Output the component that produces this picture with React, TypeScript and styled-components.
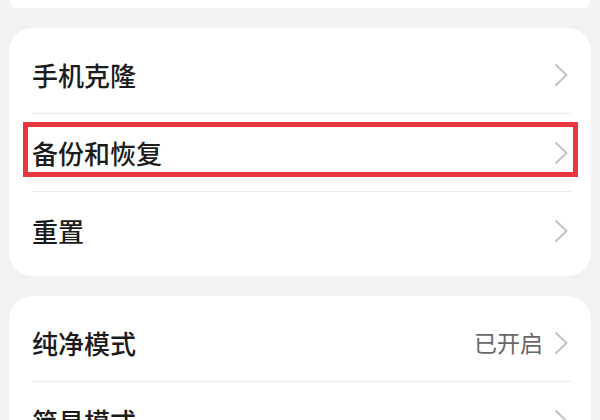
import styled, { createGlobalStyle } from "styled-components";

interface Item {
  title: string;
  value?: string;
  highlighted?: boolean;
}

const GlobalStyle = createGlobalStyle`
  html, body {
    margin: 0;
    padding: 0;
    background: #f1f2f4;
  }
  body {
    font-family: "Noto Sans CJK SC", "Noto Sans", sans-serif;
    overflow: hidden;
  }
`;

const groups: Item[][] = [
  [
    { title: "手机克隆" },
    { title: "备份和恢复", highlighted: true },
    { title: "重置" },
  ],
  [{ title: "纯净模式", value: "已开启" }, { title: "简易模式" }],
];

const Chevron = () => (
  <svg width="14" height="22" viewBox="0 0 14 22" fill="none">
    <path
      d="M2 1 L12.5 11 L2 21"
      stroke="#c3c3c3"
      strokeWidth="2"
      strokeLinecap="round"
      strokeLinejoin="round"
    />
  </svg>
);

const App = () => {
  return (
    <>
      <GlobalStyle />
      <Page>
        <CardTail />
        {groups.map((group, gi) => (
          <Card key={gi}>
            {group.map((item, index) => (
              <div key={item.title}>
                {index > 0 ? <Divider /> : null}
                <Row>
                  <Title>{item.title}</Title>
                  <Trailing>
                    {item.value ? <Value>{item.value}</Value> : null}
                    <Chevron />
                  </Trailing>
                  {item.highlighted ? <Highlight /> : null}
                </Row>
              </div>
            ))}
          </Card>
        ))}
      </Page>
    </>
  );
};

export default App;

const Page = styled("div")`
  display: flex;
  flex-direction: column;
  gap: 20px;
  padding: 0 9px;
  height: 420px;
  overflow: hidden;
`;

const CardTail = styled("div")`
  flex-shrink: 0;
  height: 8px;
  background: #ffffff;
  border-radius: 0 0 24px 24px;
`;

const Card = styled("div")`
  flex-shrink: 0;
  background: #ffffff;
  border-radius: 24px;
  padding: 8px 0 7px;
`;

const Row = styled("div")`
  position: relative;
  display: flex;
  align-items: center;
  justify-content: space-between;
  height: 77px;
  padding: 0 23px 0 23px;
`;

const Title = styled("span")`
  font-size: 26px;
  font-weight: 500;
  line-height: 1;
  color: #1c1c1c;
`;

const Trailing = styled("div")`
  display: flex;
  align-items: center;
  gap: 11px;
`;

const Value = styled("span")`
  font-size: 23px;
  line-height: 1;
  color: #676767;
`;

const Divider = styled("div")`
  height: 1px;
  margin: 0 19px 0 23px;
  background: #ececec;
`;

const Highlight = styled("div")`
  position: absolute;
  top: 8px;
  bottom: 14px;
  left: 14px;
  right: 13px;
  border: 5px solid #e8373d;
  pointer-events: none;
`;
